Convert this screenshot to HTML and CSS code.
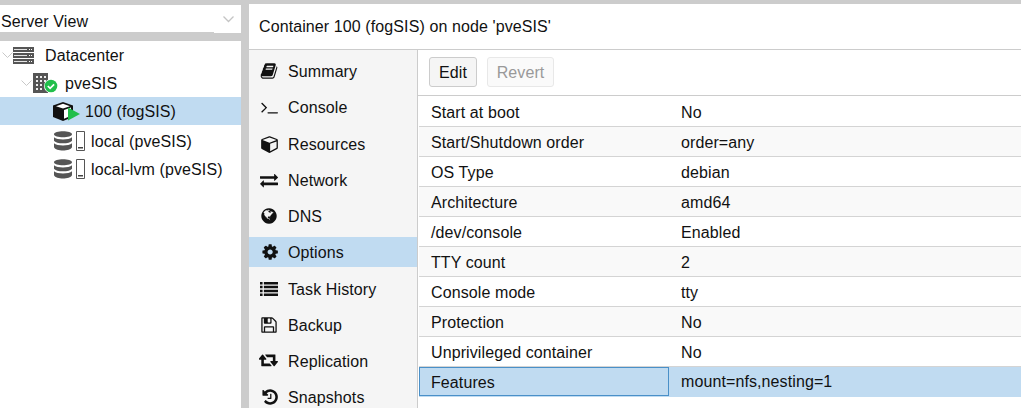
FILE: index.html
```html
<!DOCTYPE html>
<html lang="en">
<head>
<meta charset="utf-8">
<title>Container 100</title>
<link rel="stylesheet" href="styles.css">
</head>
<body>
<div class="app">
  <aside class="left">
    <div class="view-select">
      <span class="view-field">Server View</span>
      <span class="view-trigger"><svg width="11" height="7" viewBox="0 0 11 7"><path d="M.5.5l5 5 5-5" fill="none" stroke="#c4c4c4" stroke-width="1.300"/></svg></span>
    </div>
    <div class="tree">
      <div class="tree-row lvl0">
        <svg class="tw" width="11" height="7" viewBox="0 0 11 7"><path d="M.5.5l5 5 5-5" fill="none" stroke="#c8c8c8"/></svg>
        <svg class="ticon" width="21" height="17" viewBox="0 0 21 17"><path fill="#555" d="M0 0h21v5H0zM0 6h21v5H0zM0 12h21v5H0z"/><path fill="#e4e4e4" d="M1 2h13v1H1zM1 8h13v1H1zM1 14h13v1H1z"/><path fill="#fff" d="M16 2h1v1h-1zM18 2h1v1h-1zM16 8h1v1h-1zM18 8h1v1h-1zM16 14h1v1h-1zM18 14h1v1h-1z"/></svg>
        <span class="label">Datacenter</span>
      </div>
      <div class="tree-row lvl1">
        <svg class="tw" width="11" height="7" viewBox="0 0 11 7"><path d="M.5.5l5 5 5-5" fill="none" stroke="#c8c8c8"/></svg>
        <svg class="ticon" width="25" height="20" viewBox="0 0 25 20"><path fill="#555" d="M0 0h15v20H0z"/><path fill="#eee" d="M3 3h2v2H3zM7 3h2v2H7zM11 3h2v2h-2zM3 7h2v2H3zM7 7h2v2H7zM11 7h2v2h-2zM3 11h2v2H3zM7 11h2v2H7zM3 15h2v2H3zM7 15h2v2H7z"/><circle cx="18" cy="13" r="7" fill="#fff"/><circle cx="18" cy="13" r="6.300" fill="#21bf4b"/><path d="M14.800 13l2.300 2.300 4-4" fill="none" stroke="#fff" stroke-width="1.700"/></svg>
        <span class="label">pveSIS</span>
      </div>
      <div class="tree-row lvl2 selected">
        <svg class="ticon" width="27" height="19" viewBox="0 0 27 19"><path fill="#111" d="M10 0l10 3.500v11.500L10 19 0 15V3.500z"/><path fill="#fff" d="M10 1.800L17 4.200 10 6.600 3 4.200z"/><path fill="#fff" d="M11 8l7-2.400v8.200L11 16.800z"/><path fill="#21bf4b" d="M15 5.500L27 12 15 18.500z"/></svg>
        <span class="label">100 (fogSIS)</span>
      </div>
      <div class="tree-row lvl2 storage">
        <svg class="ticon" width="31" height="20" viewBox="0 0 31 20"><path fill="#555" d="M0 3.200C0-.8 18-.8 18 3.200s-18 4-18 0zM0 6.200c3 3 15 3 18 0v3.600c-2 3.400-16 3.400-18 0zM0 12.200c3 3 15 3 18 0v4c-2 4.300-16 4.300-18 0z"/><path fill="#fff" stroke="#555" d="M22.500.5h8v19h-8z"/><path fill="#444" d="M24 16h5v1.500h-5z"/></svg>
        <span class="label">local (pveSIS)</span>
      </div>
      <div class="tree-row lvl2 storage">
        <svg class="ticon" width="31" height="20" viewBox="0 0 31 20"><path fill="#555" d="M0 3.200C0-.8 18-.8 18 3.200s-18 4-18 0zM0 6.200c3 3 15 3 18 0v3.600c-2 3.400-16 3.400-18 0zM0 12.200c3 3 15 3 18 0v4c-2 4.300-16 4.300-18 0z"/><path fill="#fff" stroke="#555" d="M22.500.5h8v19h-8z"/><path fill="#444" d="M24 16h5v1.500h-5z"/></svg>
        <span class="label">local-lvm (pveSIS)</span>
      </div>
    </div>
  </aside>
  <main class="right">
    <header class="title">Container 100 (fogSIS) on node 'pveSIS'</header>
    <div class="body">
      <nav class="nav">
        <div class="nav-item"><span class="nav-icon"><svg width="18" height="18" viewBox="0 0 1792 1792"><path d="M1703 478q40 57 18 129l-275 906q-19 64-76.500 107.500t-122.500 43.500h-923q-77 0-148.500-53.500t-99.500-131.500q-24-67-2-127 0-4 3-27t4-37q1-8-3-21.500t-3-19.500q2-11 8-21t16.500-23.500 16.500-23.500q23-38 45-91.500t30-91.500q3-10 .5-30t-.5-28q3-11 17-28t17-23q21-36 42-92t25-90q1-9-2.500-32t.5-28q4-13 22-30.500t22-22.500q19-26 42.500-84.500t27.500-96.500q1-8-3-25.500t-2-26.500q2-8 9-18t18-23 17-21q8-12 16.500-30.500t15-35 16-36 19.500-32 26.500-23.500 36-11.500 47.500 5.500l-1 3q38-9 51-9h761q74 0 114 56t18 130l-274 906q-36 119-71.500 153.500t-128.500 34.500h-869q-27 0-38 15-11 16-1 43 24 70 144 70h923q29 0 56-15.500t35-41.500l300-987q7-22 5-57 38 15 59 43zm-1064 2q-4 13 2 22.500t20 9.500h608q13 0 25.500-9.500t16.500-22.500l21-64q4-13-2-22.500t-20-9.500h-608q-13 0-25.500 9.500t-16.500 22.500zm-83 256q-4 13 2 22.500t20 9.500h608q13 0 25.500-9.500t16.500-22.500l21-64q4-13-2-22.500t-20-9.500h-608q-13 0-25.500 9.500t-16.500 22.500z"/></svg></span><span class="label">Summary</span></div>
        <div class="nav-item"><span class="nav-icon"><svg width="17" height="18" viewBox="0 0 1664 1792"><path d="M585 983l-466 466q-10 10-23 10t-23-10l-50-50q-10-10-10-23t10-23l393-393-393-393q-10-10-10-23t10-23l50-50q10-10 23-10t23 10l466 466q10 10 10 23t-10 23zm1079 457v64q0 14-9 23t-23 9h-960q-14 0-23-9t-9-23v-64q0-14 9-23t23-9h960q14 0 23 9t9 23z"/></svg></span><span class="label">Console</span></div>
        <div class="nav-item"><span class="nav-icon"><svg width="17" height="18" viewBox="0 0 1664 1792"><path d="M896 1629l640-349v-636l-640 233v752zm-64-865l698-254-698-254-698 254zm832-252v768q0 35-18 65t-49 47l-704 384q-28 16-61 16t-61-16l-704-384q-31-17-49-47t-18-65v-768q0-40 23-73t61-47l704-256q22-8 44-8t44 8l704 256q38 14 61 47t23 73z"/></svg></span><span class="label">Resources</span></div>
        <div class="nav-item"><span class="nav-icon"><svg width="18" height="18" viewBox="0 0 1792 1792"><path d="M1792 1184v192q0 13-9.500 22.500t-22.500 9.500h-1376v192q0 13-9.500 22.500t-22.500 9.500q-12 0-24-10l-319-320q-9-9-9-22 0-14 9-23l320-320q9-9 23-9 13 0 22.500 9.500t9.500 22.500v192h1376q13 0 22.500 9.500t9.500 22.500zm0-544q0 14-9 23l-320 320q-9 9-23 9-13 0-22.500-9.500t-9.500-22.500v-192h-1376q-13 0-22.500-9.500t-9.500-22.500v-192q0-13 9.500-22.500t22.500-9.500h1376v-192q0-14 9-23t23-9q12 0 24 10l319 319q9 9 9 23z"/></svg></span><span class="label">Network</span></div>
        <div class="nav-item"><span class="nav-icon"><svg width="16" height="18" viewBox="0 0 1536 1792"><path d="M768 128q209 0 385.500 103t279.500 279.500 103 385.500-103 385.500-279.500 279.500-385.500 103-385.500-103-279.500-279.500-103-385.500 103-385.500 279.500-279.500 385.500-103zm274 521q-2 1-9.500 9.500t-13.500 9.500q2 0 4.500-5t5-11 3.500-7q6-7 22-15 14-6 52-12 34-8 51 11-2-2 9.500-13t14.500-12q3-2 15-4.500t15-7.500l2-22q-12 1-17.500-7t-6.500-21q0 2-6 8 0-7-4.500-8t-11.500 1-9 1q-10-3-15-7.500t-8-16.500-4-15q-2-5-9.500-11t-9.500-10q-1-2-2.500-5.500t-3-6.500-4-5.500-5.500-2.500-7 5-7.500 10-4.500 5q-3-2-6-1.500t-4.500 1-4.500 3-5 3.500q-3 2-8.500 3t-8.500 2q15-5-1-11-10-4-16-3 9-4 7.500-12t-8.500-14h5q-1-4-8.500-8.500t-17.500-8.500-13-6q-8-5-34-9.500t-33-.5q-5 6-4.500 10.500t4 14 3.500 12.500q1 6-5.500 13t-6.500 12q0 7 14 15.500t10 21.500q-3 8-16 16t-16 12q-5 8-1.500 18.500t10.500 16.500q2 2 1.500 4t-3.500 4.500-5.500 4-6.500 3.500l-3 2q-11 5-20.500-6t-13.500-26q-7-25-16-30-23-8-29 1-5-13-41-26-25-9-58-4 6-1 0-15-7-15-19-12 3-6 4-17.500t1-13.500q3-13 12-23 1-1 7-8.500t9.500-13.500.5-6q35 4 50-11 5-5 11.500-17t10.500-17q9-6 14-5.500t14.500 5.500 14.500 5q14 1 15.500-11t-7.500-20q12 1 3-17-5-7-8-9-12-4-27 5-8 4 2 8-1-1-9.500 10.500t-16.500 17.500-14-5q-1-1-5.500-13.500t-9.500-13.500q-8 0-16 15 3-8-11-15t-24-8q19-12-8-27-7-4-20.500-5t-19.500 4q-5 7-5.500 11.500t5 8 10.500 5.500 11.500 4 8.500 3q14 10 8 14-2 1-8.500 3.500t-11.500 4.500-6 4q-3 4 0 14t-2 14q-5-5-9-17.500t-7-16.500q7 9-25 6l-10-1q-4 0-16 2t-20.500 1-13.500-8q-4-8 0-20 1-4 4-2-4-3-11-9.500t-10-8.500q-46 15-94 41 6 1 12-1 5-2 13-6.500t10-5.500q34-14 42-7l5-5q14 16 20 25-7-4-30-1-20 6-22 12 7 12 5 18-4-3-11.500-10t-14.500-11-15-5q-16 0-22 1-146 80-235 222 7 7 12 8 4 1 5 9t2.500 11 11.500-3q9 8 3 19 1-1 44 27 19 17 21 21 3 11-10 18-1-2-9-9t-9-4q-3 5 .5 18.500t10.500 12.500q-7 0-9.500 16t-2.500 35.500-1 23.500l2 1q-3 12 5.500 34.500t21.500 19.500q-13 3 20 43 6 8 8 9 3 2 12 7.500t15 10 10 10.500q4 5 10 22.500t14 23.500q-2 6 9.500 20t10.500 23q-1 0-2.500 1t-2.500 1q3 7 15.500 14t15.500 13q1 3 2 10t3 11 8 2q2-20-24-62-15-25-17-29-3-5-5.500-15.500t-4.500-14.500q2 0 6 1.500t8.500 3.500 7.500 4 2 3q-3 7 2 17.500t12 18.500 17 19 12 13q6 6 14 19.500t0 13.500q9 0 20 10.500t17 19.500q5 8 8 26t5 24q2 7 8.500 13.500t12.500 9.500l16 8 13 7q5 2 18.500 10.500t21.500 11.500q10 4 16 4t14.500-2.500 13.500-3.500q15-2 29 15t21 21q36 19 55 11-2 1 .5 7.500t8 15.500 9 14.500 5.500 8.500q5 6 18 15t18 15q6-4 7-9-3 8 7 20t18 10q14-3 14-32-31 15-49-18 0-1-2.500-5.500t-4-8.500-2.500-8.500 0-7.500 5-3q9 0 10-3.500t-2-12.500-4-13q-1-8-11-20t-12-15q-5 9-16 8t-16-9q0 1-1.500 5.500t-1.500 6.500q-13 0-15-1 1-3 2.500-17.500t3.500-22.500q1-4 5.500-12t7.500-14.500 4-12.500-4.500-9.500-17.500-2.500q-19 1-26 20-1 3-3 10.500t-5 11.500-9 7q-7 3-24 2t-24-5q-13-8-22.500-29t-9.500-37q0-10 2.500-26.500t3-25-5.500-24.500q3-2 9-9.500t10-10.500q2-1 4.500-1.500t4.500 0 4-1.500 3-6q-1-1-4-3-3-3-4-3 7 3 28.500-1.500t27.500 1.500q15 11 22-2 0-1-2.500-9.500t-.5-13.500q5 27 29 9 3 3 15.500 5t17.500 5q3 2 7 5.500t5.500 4.500 5-.5 8.500-6.500q10 14 12 24 11 40 19 44 7 3 11 2t4.500-9.500 0-14-1.500-12.500l-1-8v-18l-1-8q-15-3-18.500-12t1.500-18.500 15-18.500q1-1 8-3.500t15.500-6.500 12.500-8q21-19 15-35 7 0 11-9-1 0-5-3t-7.500-5-4.500-2q9-5 2-16 5-3 7.500-11t7.500-10q9 12 21 2 8-8 1-16 5-7 20.500-10.500t18.500-9.500q7 2 8-2t1-12 3-12q4-5 15-9t13-5l17-11q3-4 0-4 18 2 31-11 10-11-6-20 3-6-3-9.500t-15-5.500q3-1 11.500-.5t10.500-.5q25-6-7-15-23-6-59 15z"/></svg></span><span class="label">DNS</span></div>
        <div class="nav-item active"><span class="nav-icon"><svg width="17" height="18" viewBox="0 0 1664 1792"><path d="M1152 896q0-106-75-181t-181-75-181 75-75 181 75 181 181 75 181-75 75-181zm512-109v222q0 12-8 23t-20 13l-185 28q-19 54-39 91 35 50 107 138 10 12 10 25t-9 23q-27 37-99 108t-94 71q-12 0-26-9l-138-108q-44 23-91 38-16 136-29 186-7 28-36 28h-222q-14 0-24.500-8.500t-11.500-21.500l-28-184q-49-16-90-37l-141 107q-10 9-25 9-14 0-25-11-126-114-165-168-7-10-7-23 0-12 8-23 15-21 51-66.500t54-70.500q-27-50-41-99l-183-27q-13-2-21-12.500t-8-23.500v-222q0-12 8-23t19-13l186-28q14-46 39-92-40-57-107-138-10-12-10-24 0-10 9-23 26-36 98.500-107.500t94.500-71.500q13 0 26 10l138 107q44-23 91-38 16-136 29-186 7-28 36-28h222q14 0 24.500 8.500t11.500 21.500l28 184q49 16 90 37l142-107q9-9 24-9 13 0 25 10 129 119 165 170 7 8 7 22 0 12-8 23-15 21-51 66.500t-54 70.500q26 50 41 98l183 28q13 2 21 12.500t8 23.500z"/></svg></span><span class="label">Options</span></div>
        <div class="nav-item"><span class="nav-icon"><svg width="18" height="18" viewBox="0 0 1792 1792"><path d="M0 288h256v256H0zM384 288h1408v256H384zM0 672h256v256H0zM384 672h1408v256H384zM0 1056h256v256H0zM384 1056h1408v256H384zM0 1440h256v256H0zM384 1440h1408v256H384z" transform="translate(0 -96)"/></svg></span><span class="label">Task History</span></div>
        <div class="nav-item"><span class="nav-icon"><svg width="16" height="18" viewBox="0 0 1536 1792"><path d="M384 1536h768v-384h-768v384zm896 0h128v-896q0-14-10-38.500t-20-34.500l-281-281q-10-10-34-20t-39-10v416q0 40-28 68t-68 28h-576q-40 0-68-28t-28-68v-416h-128v1280h128v-416q0-40 28-68t68-28h832q40 0 68 28t28 68v416zm-384-928v-320q0-13-9.500-22.500t-22.500-9.500h-192q-13 0-22.500 9.500t-9.500 22.500v320q0 13 9.500 22.500t22.500 9.500h192q13 0 22.500-9.500t9.500-22.500zm640 32v928q0 40-28 68t-68 28h-1344q-40 0-68-28t-28-68v-1344q0-40 28-68t68-28h928q40 0 88 20t76 48l280 280q28 28 48 76t20 88z"/></svg></span><span class="label">Backup</span></div>
        <div class="nav-item"><span class="nav-icon"><svg width="20" height="18" viewBox="0 0 1920 1792"><path d="M1216 1376q0 13-9.500 22.500t-22.500 9.500h-960q-8 0-13.500-2t-9-7-5.500-8-3-11.500-1-11.500v-600h-192q-26 0-45-19t-19-45q0-24 15-41l320-384q19-22 49-22t49 22l320 384q15 17 15 41 0 26-19 45t-45 19h-192v384h576q16 0 25 11l160 192q7 10 7 21zm640-416q0 24-15 41l-320 384q-20 23-49 23t-49-23l-320-384q-15-17-15-41 0-26 19-45t45-19h192v-384h-576q-16 0-25-12l-160-192q-7-9-7-20 0-13 9.500-22.500t22.500-9.500h960q8 0 13.500 2t9 7 5.500 8 3 11.500 1 11.500v600h192q26 0 45 19t19 45z"/></svg></span><span class="label">Replication</span></div>
        <div class="nav-item"><span class="nav-icon"><svg width="17" height="18" viewBox="0 0 1664 1792"><path d="M1664 896q0 156-61 298t-164 245-245 164-298 61q-172 0-327-72.500t-264-204.500q-7-10-6.500-22.500t8.500-20.500l137-138q10-9 25-9 16 2 23 12 73 95 179 147t225 52q104 0 198.500-40.500t163.500-109.500 109.500-163.500 40.500-198.500-40.500-198.500-109.500-163.500-163.500-109.500-198.500-40.500q-98 0-188 35.500t-160 101.500l137 138q31 30 14 69-17 40-59 40h-448q-26 0-45-19t-19-45v-448q0-42 40-59 39-17 69 14l130 129q107-101 244.500-156.500t284.500-55.500q156 0 298 61t245 164 164 245 61 298zm-640-288v448q0 14-9 23t-23 9h-320q-14 0-23-9t-9-23v-64q0-14 9-23t23-9h224v-352q0-14 9-23t23-9h64q14 0 23 9t9 23z"/></svg></span><span class="label">Snapshots</span></div>
      </nav>
      <section class="panel">
        <div class="toolbar">
          <button class="btn" type="button">Edit</button>
          <button class="btn disabled" type="button">Revert</button>
        </div>
        <div class="grid">
          <div class="row"><div class="k">Start at boot</div><div class="v">No</div></div>
          <div class="row"><div class="k">Start/Shutdown order</div><div class="v">order=any</div></div>
          <div class="row"><div class="k">OS Type</div><div class="v">debian</div></div>
          <div class="row"><div class="k">Architecture</div><div class="v">amd64</div></div>
          <div class="row"><div class="k">/dev/console</div><div class="v">Enabled</div></div>
          <div class="row"><div class="k">TTY count</div><div class="v">2</div></div>
          <div class="row"><div class="k">Console mode</div><div class="v">tty</div></div>
          <div class="row"><div class="k">Protection</div><div class="v">No</div></div>
          <div class="row"><div class="k">Unprivileged container</div><div class="v">No</div></div>
          <div class="row selected"><div class="k">Features</div><div class="v">mount=nfs,nesting=1</div></div>
        </div>
      </section>
    </div>
  </main>
</div>
</body>
</html>
```
FILE: styles.css
```css
* { box-sizing: border-box; }
html, body { margin: 0; height: 100%; overflow: hidden; }
body { font: 16px/20px "Liberation Sans", Arial, sans-serif; letter-spacing: .1px; color: #111; background: #ccc; }
svg { display: block; flex: none; }
.app { display: flex; height: 408px; padding-top: 4px; gap: 8px; }
.label { padding-top: 2px; }

.left { width: 241px; flex: none; display: flex; flex-direction: column; gap: 8px; padding-top: 1px; }
.view-select { height: 28px; flex: none; display: flex; }
.view-field { flex: 1; height: 27px; background: #fff; padding: 7px 0 0 1px; }
.view-trigger { width: 27px; flex: none; background: #fff; padding: 11px 0 0 9px; }
.tree { flex: 1; background: #fff; }
.tree-row { height: 28px; display: flex; align-items: center; }
.lvl0 { padding-left: 2px; }
.lvl0 .ticon { margin-right: 11px; }
.lvl1 { padding-left: 21px; }
.lvl1 .tw { margin-right: 1px; }
.lvl1 .ticon { margin-right: 7px; }
.lvl2 { padding-left: 53px; }
.lvl2.selected { background: #c0dbf1; margin-bottom: 2px; }
.selected .ticon { margin-right: 5px; }
.storage .ticon { margin-left: 1px; margin-right: 6px; }

.right { flex: 1; min-width: 0; background: #fff; display: flex; flex-direction: column; }
.title { height: 46px; flex: none; padding: 13px 0 0 10px; border-bottom: 1px solid #ccc; }
.body { flex: 1; display: flex; min-height: 0; }

.nav { width: 169px; flex: none; background: #f5f5f5; border-right: 1px solid #ccc; padding-top: 6px; overflow: hidden; }
.nav-item { height: 30px; margin-bottom: 6.25px; display: flex; align-items: center; gap: 10px; padding-left: 11px; }
.nav-item.active { background: #c0dbf1; }
.nav-icon { width: 18px; flex: none; display: flex; justify-content: center; }
.nav-icon svg { fill: #111; }

.panel { flex: 1; min-width: 0; padding-left: 1px; }
.toolbar { height: 46px; display: flex; gap: 10px; padding: 7px 0 0 11px; border-bottom: 1px solid #ccc; margin-left: -1px; }
.btn { width: 48px; height: 30px; padding: 2px 0 0; font: inherit; letter-spacing: inherit; color: #111; background: #f5f5f5; border: 1px solid #ccc; border-radius: 3px; }
.btn.disabled { width: 67px; color: #999; background: #fafafa; border-color: #e8e8e8; }

.row { display: flex; height: 30px; border-top: 1px solid #d4d4d4; background: #fff; }
.row:first-child { border-top-color: transparent; }
.row:nth-child(even) { background: #f9f9f9; }
.k { width: 250px; flex: none; padding: 6px 12px 0; }
.v { flex: 1; padding: 6px 12px 0; }
.row.selected { height: 31px; background: #c0dbf1; }
.row.selected .k { height: 29px; padding: 5px 11px 0; border: 1px solid #4a90c8; }
.row.selected .v { padding-top: 5px; }
```
